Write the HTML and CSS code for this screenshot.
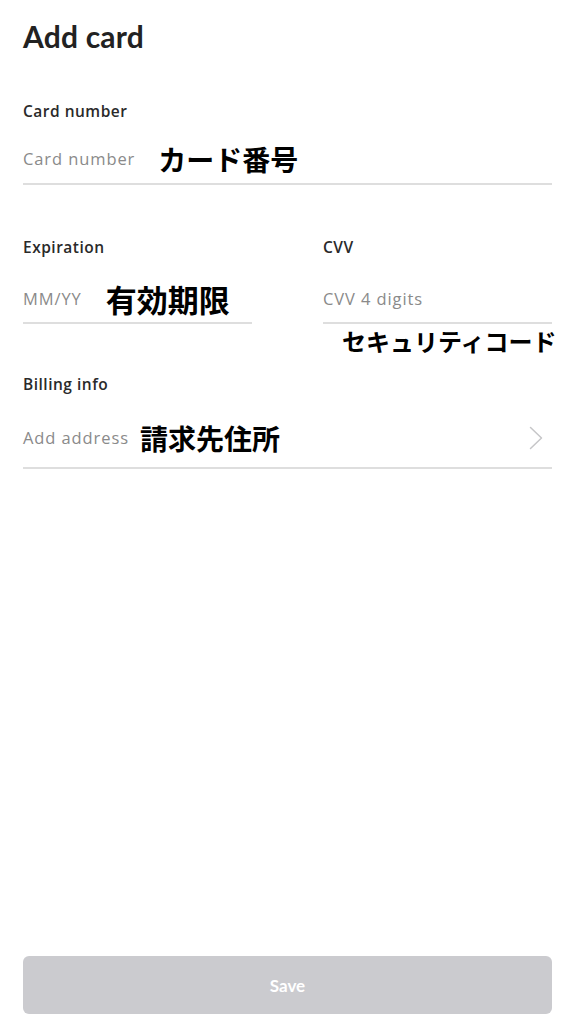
FILE: index.html
```html
<!DOCTYPE html>
<html lang="ja">
<head>
<meta charset="utf-8">
<title>Add card</title>
<link rel="stylesheet" href="styles.css">
</head>
<body>
<main class="page">
  <h1 class="title">Add card</h1>

  <section class="field field-card">
    <div class="label">Card number</div>
    <div class="row row-card">
      <span class="placeholder">Card number</span>
      <span class="note note-card">カード番号</span>
    </div>
  </section>

  <div class="pair">
    <section class="field">
      <div class="label">Expiration</div>
      <div class="row row-exp">
        <span class="placeholder">MM/YY</span>
        <span class="note note-exp">有効期限</span>
      </div>
    </section>
    <section class="field">
      <div class="label">CVV</div>
      <div class="row row-exp">
        <span class="placeholder">CVV 4 digits</span>
      </div>
      <div class="note note-cvv">セキュリティコード</div>
    </section>
  </div>

  <section class="field field-billing">
    <div class="label">Billing info</div>
    <div class="row row-billing">
      <span class="placeholder">Add address</span>
      <span class="note note-billing">請求先住所</span>
      <svg class="chevron" width="14" height="24" viewBox="0 0 14 24" aria-hidden="true">
        <polyline points="1.5,1.5 12.5,12 1.5,22.5" fill="none" stroke="#c6c6c8" stroke-width="1.5" stroke-linecap="round" stroke-linejoin="round"/>
      </svg>
    </div>
  </section>

  <button class="save" type="button">Save</button>
</main>
</body>
</html>
```

FILE: styles.css
```css
html, body {
  margin: 0;
  padding: 0;
  background: #ffffff;
}

.page {
  box-sizing: border-box;
  width: 576px;
  height: 1024px;
  padding: 0 24px 10px 23px;
  display: flex;
  flex-direction: column;
  font-family: "Open Sans", "Noto Sans", "Noto Sans CJK JP", sans-serif;
  color: #222222;
}

.title {
  margin: 18px 0 0;
  font-family: "Lato", "Noto Sans", sans-serif;
  font-size: 30px;
  line-height: 36px;
  font-weight: 700;
  color: #222222;
  letter-spacing: 0.2px;
}

.label {
  font-size: 15.5px;
  line-height: 20px;
  font-weight: 600;
  color: #2a2a2a;
  letter-spacing: 0.5px;
}

.field-card {
  margin-top: 47px;
}

.row {
  display: flex;
  align-items: center;
  border-bottom: 2px solid #dedede;
}

.row-card {
  margin-top: 14px;
  height: 48px;
}

.pair {
  margin-top: 52px;
  display: grid;
  grid-template-columns: minmax(0, 1fr) minmax(0, 1fr);
  column-gap: 71px;
  align-items: start;
}

.row-exp {
  margin-top: 18px;
  height: 47px;
}

.field-billing {
  margin-top: 21px;
}

.row-billing {
  margin-top: 15px;
  height: 58px;
}

.placeholder {
  font-size: 16.5px;
  line-height: 20px;
  color: #8a8a8a;
  white-space: nowrap;
  letter-spacing: 0.9px;
}

.note {
  font-family: "Noto Sans CJK JP", sans-serif;
  font-weight: 700;
  color: #000000;
  white-space: nowrap;
}

.note-card {
  margin-left: 23px;
  font-size: 28px;
  line-height: 28px;
}

.note-exp {
  margin-left: 24px;
  font-size: 31px;
  line-height: 31px;
}

.note-billing {
  margin-left: 11px;
  font-size: 28px;
  line-height: 28px;
}

.note-cvv {
  margin: 5px 0 0 19px;
  font-size: 24px;
  line-height: 24px;
}

.chevron {
  margin-left: auto;
  margin-right: 9px;
  flex: none;
}

.save {
  margin-top: auto;
  height: 58px;
  width: 100%;
  border: none;
  border-radius: 6px;
  background: #cbcbcf;
  color: #ffffff;
  font-family: "Lato", "Noto Sans", sans-serif;
  font-size: 17px;
  font-weight: 700;
  cursor: default;
}
```
